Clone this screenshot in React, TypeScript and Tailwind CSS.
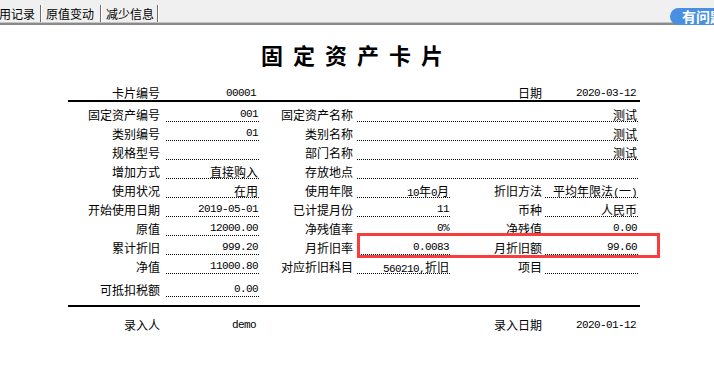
import React from "react";

type Cell = {
  label: string;
  value?: React.ReactNode;
  mono?: boolean;
  wide?: boolean;
};

const mono = "font-['Liberation_Mono',monospace] text-[11px] tracking-[-0.6px]";

const M = ({ children }: { children: React.ReactNode }) => (
  <span className={mono}>{children}</span>
);

const rows: Cell[][] = [
  [
    { label: "固定资产编号", value: "001", mono: true },
    { label: "固定资产名称", value: "测试", wide: true },
  ],
  [
    { label: "类别编号", value: "01", mono: true },
    { label: "类别名称", value: "测试", wide: true },
  ],
  [{ label: "规格型号" }, { label: "部门名称", value: "测试", wide: true }],
  [{ label: "增加方式", value: "直接购入" }, { label: "存放地点", wide: true }],
  [
    { label: "使用状况", value: "在用" },
    { label: "使用年限", value: <><M>10</M>年<M>0</M>月</> },
    { label: "折旧方法", value: <>平均年限法<M>(</M>一<M>)</M></> },
  ],
  [
    { label: "开始使用日期", value: "2019-05-01", mono: true },
    { label: "已计提月份", value: "11", mono: true },
    { label: "币种", value: "人民币" },
  ],
  [
    { label: "原值", value: "12000.00", mono: true },
    { label: "净残值率", value: "0%", mono: true },
    { label: "净残值", value: "0.00", mono: true },
  ],
  [
    { label: "累计折旧", value: "999.20", mono: true },
    { label: "月折旧率", value: "0.0083", mono: true },
    { label: "月折旧额", value: "99.60", mono: true },
  ],
  [
    { label: "净值", value: "11000.80", mono: true },
    { label: "对应折旧科目", value: <><M>560210,</M>折旧</> },
    { label: "项目" },
  ],
];

// label box width / gap before the dotted field, per column
const labelW = ["w-[92px]", "w-[94px]", "w-[92px]"];
const gapW = ["ml-[6px]", "ml-[4px]", "ml-[3px]"];

const Row = ({ cells, className = "" }: { cells: Cell[]; className?: string }) => (
  <div className={`flex h-[19px] items-end ${className}`}>
    {cells.map((c, i) => (
      <React.Fragment key={c.label}>
        <div className={`${labelW[i]} shrink-0 whitespace-nowrap text-right leading-[14px]`}>
          {c.label}
        </div>
        <div
          className={`${gapW[i]} ${c.wide ? "w-[281px]" : "w-[93px]"} h-[14px] shrink-0 whitespace-nowrap border-b border-dotted border-black pr-[1px] text-right leading-[13px] ${c.mono ? mono : ""}`}
        >
          {c.value}
        </div>
      </React.Fragment>
    ))}
  </div>
);

const InfoRow = ({ a, b, c, d, className = "" }: { a: string; b: string; c: string; d: string; className?: string }) => (
  <div className={`flex h-[15px] items-end ${className}`}>
    <div className="w-[92px] text-right leading-[14px]">{a}</div>
    <div className={`w-[96px] text-right leading-[14px] ${mono}`}>{b}</div>
    <div className="w-[286px] text-right leading-[14px]">{c}</div>
    <div className={`w-[94px] text-right leading-[14px] ${mono}`}>{d}</div>
  </div>
);

const Sep = () => (
  <div className="h-[17px] w-[2px] shrink-0 self-end border-l border-[#6d6d6d] bg-white" />
);

const TabBar = () => (
  <div className="bg-[#f0f0f0]">
    <div className="flex h-[22px] items-end">
      <span className="-ml-[1px] w-[41px] shrink-0 leading-[16px]">用记录</span>
      <Sep />
      <span className="w-[58px] shrink-0 pl-[4px] leading-[16px]">原值变动</span>
      <Sep />
      <span className="w-[55px] shrink-0 pl-[4px] leading-[16px]">减少信息</span>
      <Sep />
    </div>
    <div className="h-[1px] bg-[#c4c4c4]" />
    <div className="h-[2px] bg-[#8a8a8a]" />
  </div>
);

export default function App() {
  return (
    <div className="relative h-[377px] w-[714px] overflow-hidden bg-white text-[12px] text-black font-['Noto_Sans_CJK_SC',sans-serif]">
      <TabBar />
      <div className="absolute left-[670px] top-[8px] h-[17px] w-[70px] whitespace-nowrap rounded-full bg-[#4a90e2] pl-[12px] text-[14px] font-bold leading-[17px] text-white">
        有问题
      </div>

      <h1 className="mt-[14px] h-[30px] text-center text-[22px] font-bold leading-[30px] tracking-[10px]">
        固定资产卡片
      </h1>

      <div className="ml-[68px] w-[572px]">
        <InfoRow className="mt-[16px]" a="卡片编号" b="00001" c="日期" d="2020-03-12" />
        <div className="h-[2px] bg-black" />
        <div className="mt-[1px]">
          {rows.map((r, i) => (
            <Row key={i} cells={r} />
          ))}
        </div>
        <Row className="mt-[4px]" cells={[{ label: "可抵扣税额", value: "0.00", mono: true }]} />
        <div className="mt-[8px] h-[2px] bg-black" />
        <InfoRow className="mt-[10px]" a="录入人" b="demo" c="录入日期" d="2020-01-12" />
      </div>

      {/* highlight */}
      <div className="pointer-events-none absolute left-[357px] top-[233px] z-10 h-[25px] w-[303px] border-[3px] border-[#fa3c3c]" />
    </div>
  );
}
